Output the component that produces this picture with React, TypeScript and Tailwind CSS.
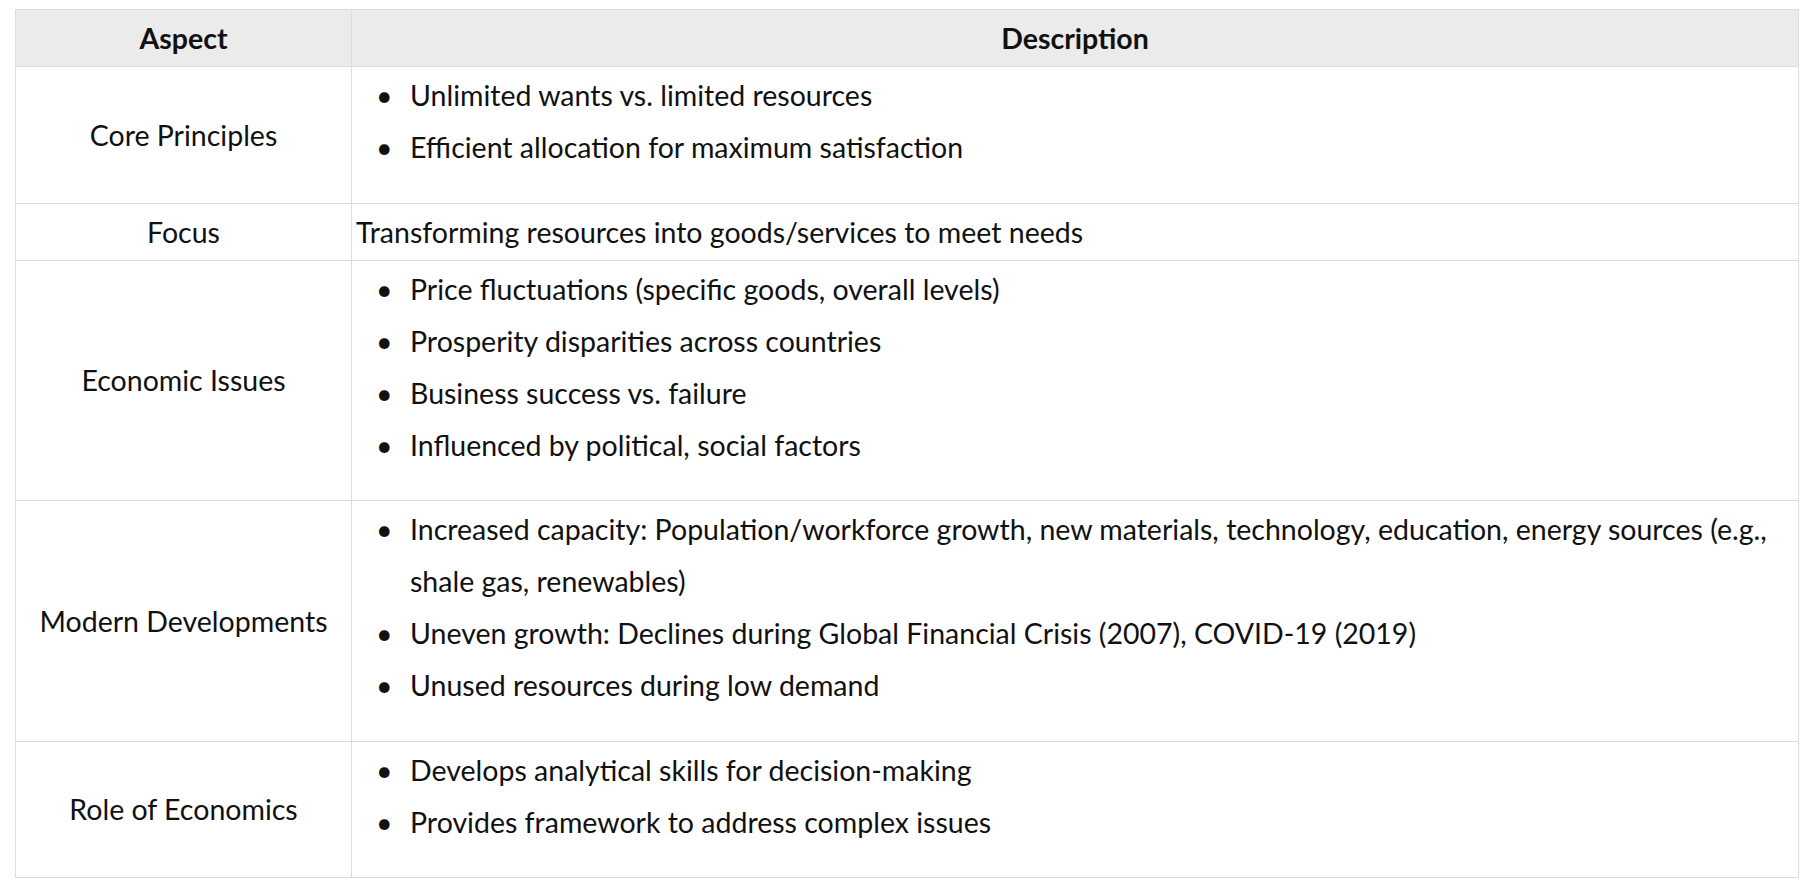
const rows: { aspect: string; text?: string; items?: string[] }[] = [
  {
    aspect: "Core Principles",
    items: ["Unlimited wants vs. limited resources", "Efficient allocation for maximum satisfaction"],
  },
  { aspect: "Focus", text: "Transforming resources into goods/services to meet needs" },
  {
    aspect: "Economic Issues",
    items: [
      "Price fluctuations (specific goods, overall levels)",
      "Prosperity disparities across countries",
      "Business success vs. failure",
      "Influenced by political, social factors",
    ],
  },
  {
    aspect: "Modern Developments",
    items: [
      "Increased capacity: Population/workforce growth, new materials, technology, education, energy sources (e.g., shale gas, renewables)",
      "Uneven growth: Declines during Global Financial Crisis (2007), COVID-19 (2019)",
      "Unused resources during low demand",
    ],
  },
  {
    aspect: "Role of Economics",
    items: ["Develops analytical skills for decision-making", "Provides framework to address complex issues"],
  },
];

export default function App() {
  return (
    <div className="min-h-screen bg-white pt-[9px] pl-[15px] font-['Lato','Liberation_Sans',sans-serif] text-[28.5px] text-[#111]">
      <table className="w-[1784px] border-collapse border border-[#dcdcdc] leading-[52px]">
        <thead>
          <tr className="bg-[#ebebeb]">
            <th className="w-[336px] border border-[#dcdcdc] py-[2px] text-center font-bold">Aspect</th>
            <th className="border border-[#dcdcdc] py-[2px] text-center font-bold">Description</th>
          </tr>
        </thead>
        <tbody>
          {rows.map((row) => (
            <tr key={row.aspect}>
              <td className="border border-[#dcdcdc] py-[2px] text-center align-middle">{row.aspect}</td>
              <td className="border border-[#dcdcdc] py-[2px] pl-[4px] pr-[20px] align-middle">
                {row.items ? (
                  <ul className="mb-[27.5px] pl-[20px]">
                    {row.items.map((item) => (
                      <li key={item} className="flex">
                        <span className="w-[34px] shrink-0">•</span>
                        <span className="flex-1">{item}</span>
                      </li>
                    ))}
                  </ul>
                ) : (
                  row.text
                )}
              </td>
            </tr>
          ))}
        </tbody>
      </table>
    </div>
  );
}
